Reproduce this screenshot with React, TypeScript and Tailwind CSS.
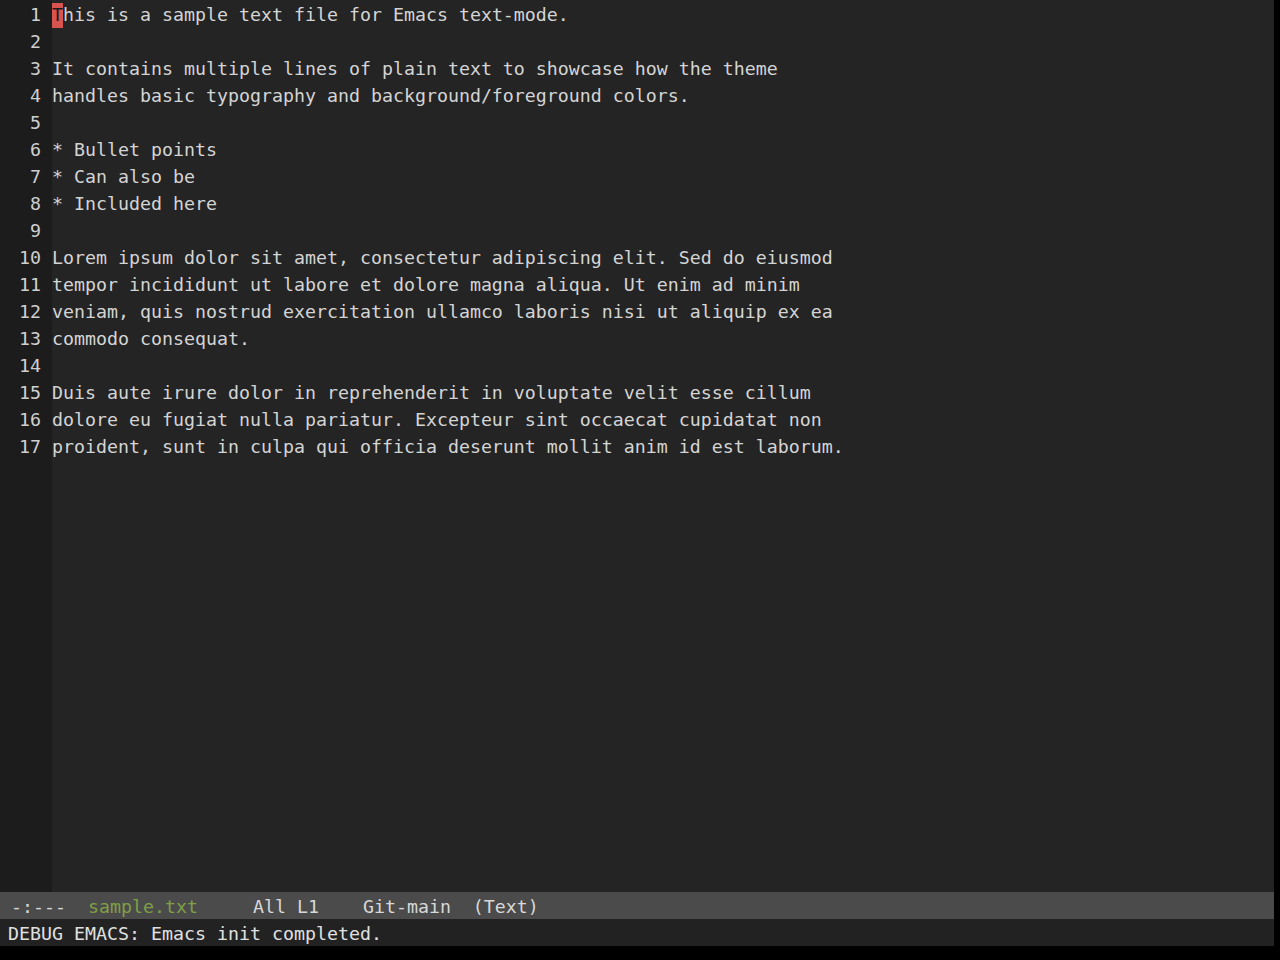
import React from 'react'

const lines = [
  'This is a sample text file for Emacs text-mode.',
  '',
  'It contains multiple lines of plain text to showcase how the theme',
  'handles basic typography and background/foreground colors.',
  '',
  '* Bullet points',
  '* Can also be',
  '* Included here',
  '',
  'Lorem ipsum dolor sit amet, consectetur adipiscing elit. Sed do eiusmod',
  'tempor incididunt ut labore et dolore magna aliqua. Ut enim ad minim',
  'veniam, quis nostrud exercitation ullamco laboris nisi ut aliquip ex ea',
  'commodo consequat.',
  '',
  'Duis aute irure dolor in reprehenderit in voluptate velit esse cillum',
  'dolore eu fugiat nulla pariatur. Excepteur sint occaecat cupidatat non',
  'proident, sunt in culpa qui officia deserunt mollit anim id est laborum.',
]

export default function App() {
  return (
    <div
      className="w-[1280px] h-[960px] bg-black flex flex-col overflow-hidden text-[18.27px] leading-[27px] whitespace-pre"
      style={{ fontFamily: '"DejaVu Sans Mono", "Liberation Mono", monospace' }}
    >
      <div className="w-[1274px] flex flex-col">
        {/* Buffer window */}
        <div className="h-[892px] flex bg-[#242424]">
          {/* Line numbers */}
          <div className="w-[52px] bg-[#1c1c1c] flex flex-col items-end pt-px pr-[11px] text-[#cfcfcf]">
            {lines.map((_, i) => (
              <div key={i}>{i + 1}</div>
            ))}
          </div>
          <div className="flex-1 flex flex-col pt-px text-[#d4d4d4]">
            {lines.map((line, i) =>
              i === 0 ? (
                <div key={i} className="h-[27px]">
                  <span className="relative">
                    <span className="absolute left-0 top-[-1px] w-[11px] h-[25px] bg-[#d9534f]" />
                    <span className="relative text-[#1c1c1c]">T</span>
                  </span>
                  {line.slice(1)}
                </div>
              ) : (
                <div key={i} className="h-[27px]">
                  {line}
                </div>
              )
            )}
          </div>
        </div>

        {/* Mode line */}
        <div className="h-[27px] bg-[#4b4b4b] text-[#d8d8d8] pl-[11px] pt-px">
          <div className="h-[26px]">
            <span>-:---  </span>
            <span className="text-[#7f9f45]">sample.txt</span>
            <span>     All L1    Git-main  (Text)</span>
          </div>
        </div>

        {/* Echo area */}
        <div className="h-[27px] bg-[#222222] text-[#e0e0e0] pl-[8px] pt-px">
          <div className="h-[26px]">DEBUG EMACS: Emacs init completed.</div>
        </div>
      </div>
    </div>
  )
}
